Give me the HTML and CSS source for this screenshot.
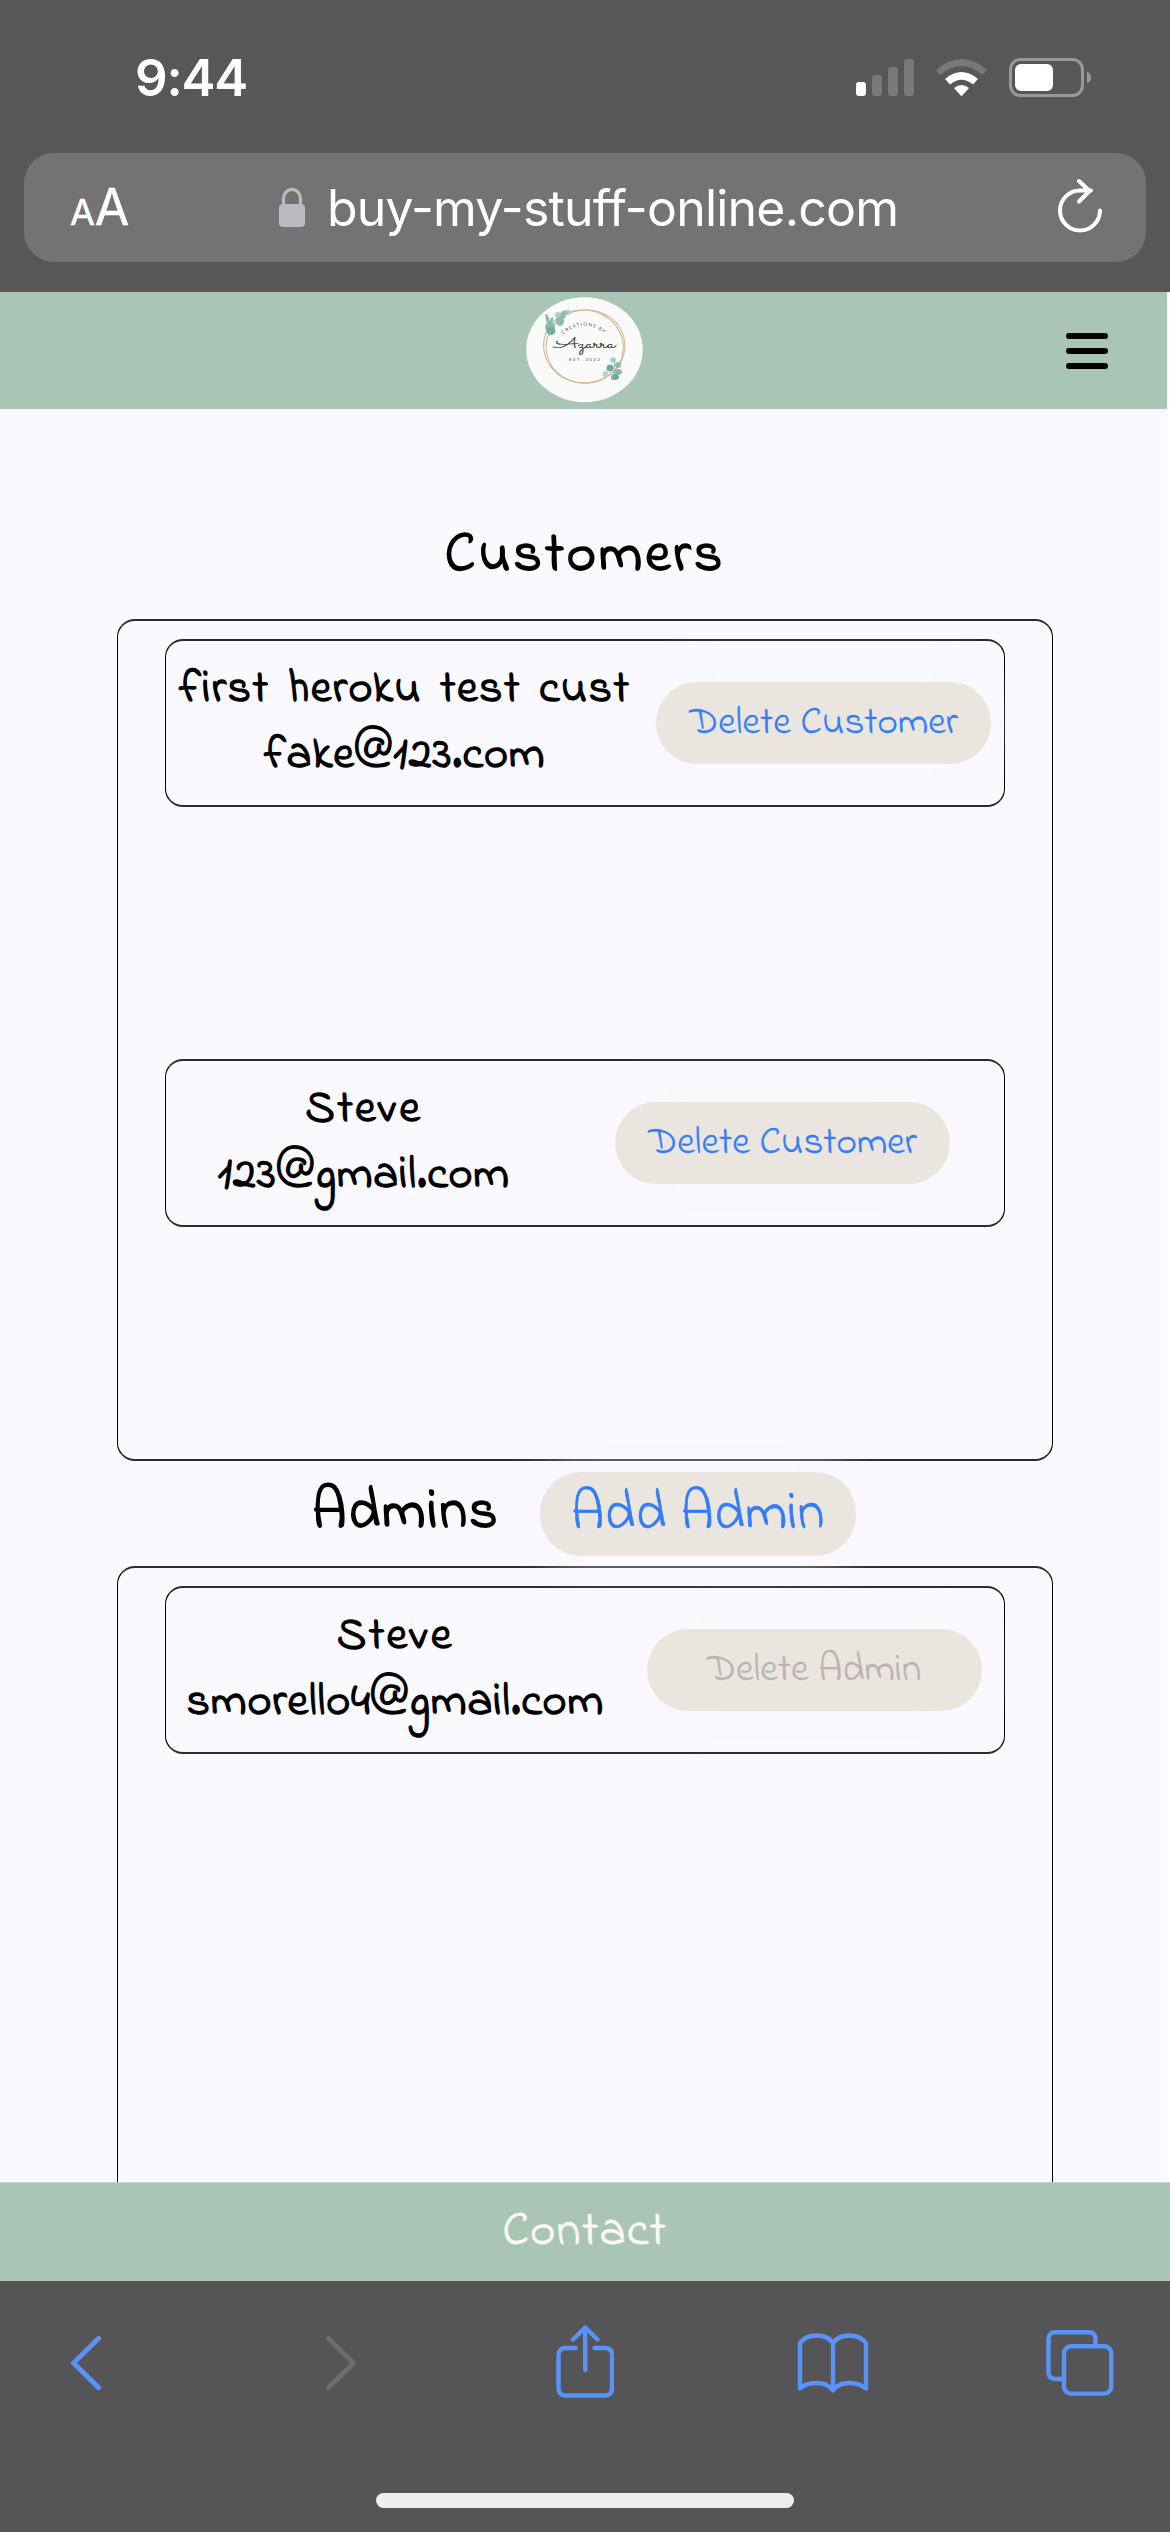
FILE: index.html
```html
<!DOCTYPE html>
<html lang="en">
<head>
<meta charset="utf-8">
<title>Customers</title>
<link rel="stylesheet" href="styles.css">
</head>
<body>
<div class="screen">
  <header class="browser-top">
    <div class="status">
      <span class="clock">9:44</span>
      <svg class="status-icons" width="240" height="44" viewBox="0 0 240 44">
        <g fill="#797979"><rect x="16" y="17" width="10" height="21" rx="3"/><rect x="32" y="9" width="10" height="29" rx="3"/><rect x="48" y="1" width="10" height="37" rx="3"/></g>
        <rect x="0" y="24" width="10" height="14" rx="3" fill="#fff"/>
        <path d="M80 12Q105.500 -10 131 12L126.500 17Q105.500 -1 84.500 17Z" fill="#797979"/>
        <path d="M89 21Q105.500 7 122 21L117 26.500Q105.500 17 94 26.500Z" fill="#fff"/>
        <path d="M98 30Q105.500 24 113 30L106.500 37.300Q105.500 38.500 104.500 37.300Z" fill="#fff"/>
        <rect x="154.500" y="1.500" width="72" height="36" rx="10" fill="none" stroke="#999" stroke-width="3"/>
        <rect x="159" y="6" width="38" height="27" rx="6" fill="#fff"/>
        <path d="M231 13.500Q235 15.500 235 19.500T231 25.500Z" fill="#999"/>
      </svg>
    </div>
    <div class="address">
      <span class="text-size"><span class="small-a">A</span>A</span>
      <div class="site">
        <svg width="26" height="39" viewBox="0 0 26 39"><path d="M4.500 18V10.500a8.500 9 0 0 1 17 0V18" fill="none" stroke="#bbbac1" stroke-width="3.200"/><rect y="16" width="26" height="23" rx="4" fill="#bbbac1"/></svg>
        <span class="url">buy-my-stuff-online.com</span>
      </div>
      <svg class="reload" width="46" height="56" viewBox="0 0 46 56" fill="none" stroke="#fff" stroke-width="4" stroke-linecap="round" stroke-linejoin="round"><path d="M42 32.500A20 20 0 1 1 22 12.500H33M21 3L31.500 13L21 23.500"/></svg>
    </div>
  </header>

  <nav class="navbar">
    <svg class="logo" width="117" height="106" viewBox="0 0 117 106">
      <defs><path id="logo-arc" d="M37 37.500Q58 20 80 37.500"/></defs>
      <ellipse cx="58.500" cy="52.700" rx="58.300" ry="52.500" fill="#fafafa"/>
      <g fill="none" stroke="#cdb78e" stroke-width="1"><ellipse cx="57.500" cy="49.500" rx="40" ry="36.500" transform="rotate(8 57.500 49.500)"/><ellipse cx="59.500" cy="49.500" rx="39.500" ry="36.500" transform="rotate(-8 59.500 49.500)"/></g>
      <g fill="#8cbca9">
        <path d="M19 17Q24 18 23 24Q28 16 27 24Q25 29 21 28Z"/><ellipse cx="24" cy="30" rx="5" ry="4.500"/><ellipse cx="25" cy="34" rx="4.500" ry="4" fill="#73aa94"/><ellipse cx="34" cy="24" rx="4" ry="5"/><ellipse cx="37" cy="18" rx="3" ry="5" transform="rotate(25 37 18)"/><circle cx="42" cy="15" r="2.500" fill="#aad1c2"/><circle cx="32" cy="18" r="3" fill="#aad1c2"/>
        <circle cx="87" cy="63" r="2.800" fill="#aad1c2"/><circle cx="84" cy="71" r="3.600" fill="#73aa94"/><circle cx="92" cy="68" r="3"/><circle cx="79.500" cy="77" r="3" fill="#b6d5ca"/><ellipse cx="92" cy="75" rx="4" ry="3"/><ellipse cx="89" cy="80" rx="4" ry="3" fill="#73aa94"/>
      </g>
      <path d="M23 39Q24 25 42 15M88 62Q90 74 85 83" fill="none" stroke="#8cbca9" stroke-width=".8"/>
      <text class="logo-small"><textPath href="#logo-arc" textLength="45">CREATIONS BY</textPath></text>
      <text class="logo-name" x="28" y="51" textLength="61" lengthAdjust="spacingAndGlyphs">Azarra</text>
      <text class="logo-small" x="43" y="64" textLength="31">EST. 2022</text>
    </svg>
    <svg class="menu" width="42" height="36" viewBox="0 0 42 36"><rect width="42" height="6" rx="3"/><rect y="15" width="42" height="6" rx="3"/><rect y="30" width="42" height="6" rx="3"/></svg>
  </nav>

  <main class="page">
    <h1 class="title">Customers</h1>
    <section class="list">
      <div class="slot">
        <article class="card">
          <div class="person wide"><span class="full-name">first heroku test cust</span><span>fake@123.com</span></div>
          <button class="pill delete">Delete Customer</button>
        </article>
      </div>
      <div class="slot">
        <article class="card">
          <div class="person narrow"><span class="name">Steve</span><span>123@gmail.com</span></div>
          <button class="pill delete">Delete Customer</button>
        </article>
      </div>
    </section>
    <div class="admin-head">
      <h2 class="admins">Admins</h2>
      <button class="pill add">Add Admin</button>
    </div>
    <section class="list">
      <div class="slot">
        <article class="card">
          <div class="person mid"><span class="name">Steve</span><span>smorello4@gmail.com</span></div>
          <button class="pill delete off" disabled>Delete Admin</button>
        </article>
      </div>
    </section>
  </main>

  <footer class="contact"><span>Contact</span></footer>

  <div class="browser-bottom">
    <div class="tools">
      <svg width="32" height="56" viewBox="0 0 32 56"><path d="M28.500 3.500L3.500 28L28.500 52.500"/></svg>
      <svg class="dim" width="32" height="56" viewBox="0 0 32 56"><path d="M3.500 3.500L28.500 28L3.500 52.500"/></svg>
      <svg class="share" width="58" height="74" viewBox="0 0 58 74"><path d="M19.500 23H10Q2.500 23 2.500 30V63Q2.500 70.500 10 70.500H48.500Q56 70.500 56 63V30Q56 23 48.500 23H38.500M29.200 45V3.500M17 14.500L29.200 2.500L41.500 14.500" stroke-width="4.400"/></svg>
      <svg width="72" height="60" viewBox="0 0 72 60"><path d="M36 10Q31 2.500 19.500 2.500Q8.500 2.500 3 10V55.500Q9 50 19.500 50Q31 50 36 57.500Q41 50 52.500 50Q62.500 50 69 55.500V10Q63 2.500 52.500 2.500Q41 2.500 36 10V56" stroke-width="4.400"/></svg>
      <svg width="68" height="66" viewBox="0 0 68 66"><path d="M16 49H9.500Q2.500 49 2.500 42V9Q2.500 2.300 9.500 2.300H42.500Q49.500 2.300 49.500 9V16" stroke-width="4.400"/><rect x="18" y="16.300" width="47.300" height="47.300" rx="7" stroke-width="4.400"/></svg>
    </div>
    <div class="home-bar"></div>
  </div>
</div>
</body>
</html>
```
FILE: styles.css
```css
* { box-sizing: border-box; }
body { margin: 0; background: #fff; }
.screen { width: 1170px; height: 2532px; display: flex; flex-direction: column; overflow: hidden; font-family: "Indie Flower", Lato, sans-serif; color: #000; font-variant-ligatures: none; }
.screen svg { display: block; flex: none; }

/* Browser chrome */
.browser-top { height: 292px; flex: none; background: #575757; color: #fff; font-family: Inter, sans-serif; }
.status { height: 153px; padding: 58px 74px 0 135px; display: flex; justify-content: space-between; align-items: flex-start; }
.clock { font-size: 51px; line-height: 40px; font-weight: 600; letter-spacing: -1.2px; }
.address { height: 109px; margin: 0 24px; padding: 0 42px 0 46px; border-radius: 30px; background: #737373; display: flex; align-items: center; }
.text-size { width: 60px; font-size: 50px; line-height: 60px; padding-top: 3px; white-space: nowrap; -webkit-text-stroke: .5px; }
.small-a { font-size: 36px; }
.site { display: flex; align-items: center; gap: 22px; margin-left: 149px; }
.url { font-size: 50px; line-height: 60px; white-space: nowrap; letter-spacing: -.8px; }
.reload { margin: -4px 0 0 auto; }

/* Shop header */
.navbar { width: 1167px; height: 117px; flex: none; padding: 5px 59px 0 526px; background: #a9c5b6; display: flex; justify-content: space-between; }
.menu { margin-top: 36px; }
.logo-small { font: 4.6px Lato, sans-serif; fill: #555; }
.logo-name { font: 17px Sacramento, "Dancing Script", "Indie Flower", cursive; fill: #333; stroke: #333; stroke-width: .2px; }

/* Lists */
.page { width: 1167px; flex: 1; min-height: 0; overflow: hidden; background: #faf9fe; padding: 110px 114px 0 117px; }
.title, .admins { margin: 0; font-size: 56px; font-weight: 700; }
.title { height: 100px; line-height: 75px; text-align: center; letter-spacing: 3px; }
.list { height: 842px; padding: 18px 47px 0; border: solid #2c2c2e; border-width: 2px 1px; border-left-color: #000; border-right-color: #000; border-radius: 18px; }
.slot { height: 420px; }
.card { height: 168px; border: solid #2c2c2e; border-width: 2px 1px; border-left-color: #000; border-right-color: #000; border-radius: 18px; display: flex; justify-content: space-around; align-items: center; }
.person { display: flex; flex-direction: column; align-items: center; font-size: 46px; line-height: 66px; white-space: nowrap; font-weight: 700; padding-bottom: 1px; letter-spacing: .9px; }
.full-name { letter-spacing: 1.5px; word-spacing: 5px; }
.name { letter-spacing: 2.3px; }
.wide { width: 452px; }
.narrow { width: 288px; }
.mid { width: 414px; }
.pill { border: 0; border-radius: 41px; background: #eae5df; color: #347cf6; font-family: inherit; font-variant-ligatures: none; padding: 0; white-space: nowrap; box-shadow: 0 0 40px 6px rgba(250, 249, 250, .6); }
.delete { width: 335px; height: 82px; font-size: 39px; letter-spacing: .1px; -webkit-text-stroke: .3px; }
.off { color: #b7b4b0; }
.admin-head { height: 105px; display: flex; align-items: center; justify-content: center; gap: 42px; padding-right: 2px; position: relative; }
.admins { width: 186px; line-height: 60px; letter-spacing: 2px; }
.add { width: 316px; height: 84px; font-size: 54px; letter-spacing: .5px; -webkit-text-stroke: .6px; padding-top: 2px; }

/* Footer bar */
.contact { height: 99px; flex: none; background: #a9c5b6; border-top: 1px solid #c1d5cd; color: #faf7f5; font-size: 48px; line-height: 98px; letter-spacing: 1.5px; -webkit-text-stroke: .9px; text-align: center; }
.browser-bottom { height: 251px; flex: none; background: #555557; padding-top: 45px; display: flex; flex-direction: column; align-items: center; gap: 93px; }
.tools { width: 1170px; height: 74px; padding-left: 70px; display: grid; grid-template-columns: 255px 231px 241px 249px 68px; align-items: center; fill: none; stroke: #5a93f8; stroke-width: 5px; stroke-linecap: round; stroke-linejoin: round; }
.share { margin-top: -3px; }
.dim { stroke: #6d6d6f; }
.home-bar { width: 418px; height: 15px; border-radius: 8px; background: #eee; }
```
